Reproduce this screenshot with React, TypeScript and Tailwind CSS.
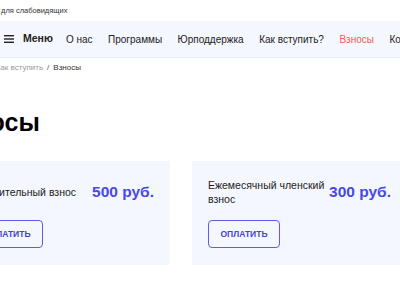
import React from "react";

export default function App() {
  const nav = ["О нас", "Программы", "Юрподдержка", "Как вступить?"];
  return (
    <div
      className="w-[400px] h-[284px] overflow-hidden bg-white text-[#222]"
      style={{ fontFamily: "'Liberation Sans', Arial, sans-serif" }}
    >
      <div className="h-[21px] flex items-center pl-[1px] text-[7.5px] text-[#333] whitespace-nowrap">
        для слабовидящих
      </div>
      <div className="h-[37px] bg-[#f4f7fd] border-b border-[#e9edf6] flex items-center whitespace-nowrap text-[10px]">
        <svg className="ml-[4px] shrink-0" width="10" height="8" viewBox="0 0 10 8">
          <rect x="0" y="0" width="10" height="1.4" fill="#222" />
          <rect x="0" y="3.3" width="10" height="1.4" fill="#222" />
          <rect x="0" y="6.6" width="10" height="1.4" fill="#222" />
        </svg>
        <span className="ml-[9px] font-bold text-[10.5px]">Меню</span>
        <div className="ml-[13px] flex items-center gap-[15.5px]">
          {nav.map((n) => (
            <span key={n}>{n}</span>
          ))}
          <span className="text-[#f25a52]">Взносы</span>
          <span>Контакты</span>
        </div>
      </div>
      <div className="ml-[-45px] w-[452px] whitespace-nowrap">
        <div className="mt-[3px] h-[14px] flex items-center gap-[4px] text-[8px]">
          <span className="text-[#9a9a9a]">Главная</span>
          <span className="text-[#9a9a9a]">/</span>
          <span className="text-[#9a9a9a]">Как вступить</span>
          <span className="text-[#555]">/</span>
          <span className="text-[#333]">Взносы</span>
        </div>
        <h1 className="mt-[32px] ml-[-11px] text-[25px] font-bold leading-[30px] text-black">Взносы</h1>
        <div className="mt-[24px] grid grid-cols-2 gap-[22px]">
          {[
            { t: "Вступительный взнос", p: "500 руб." },
            { t: "Ежемесячный членский взнос", p: "300 руб." },
          ].map((c) => (
            <div key={c.p} className="bg-[#f4f7fd] px-[16px] pt-[17px] pb-[17px] flex flex-col h-[104px]">
              <div className="flex items-center min-h-[28px]">
                <div className="w-[120px] whitespace-normal text-[10.5px] leading-[14px] text-[#222]">{c.t}</div>
                <div className="ml-auto text-[15.5px] font-bold text-[#4848e6]">{c.p}</div>
              </div>
              <button className="mt-auto w-[72px] h-[28px] border-[1.5px] border-[#5c5ce8] rounded-[4px] text-[8.5px] font-bold text-[#4343d1] flex items-center justify-center">
                ОПЛАТИТЬ
              </button>
            </div>
          ))}
        </div>
      </div>
    </div>
  );
}
